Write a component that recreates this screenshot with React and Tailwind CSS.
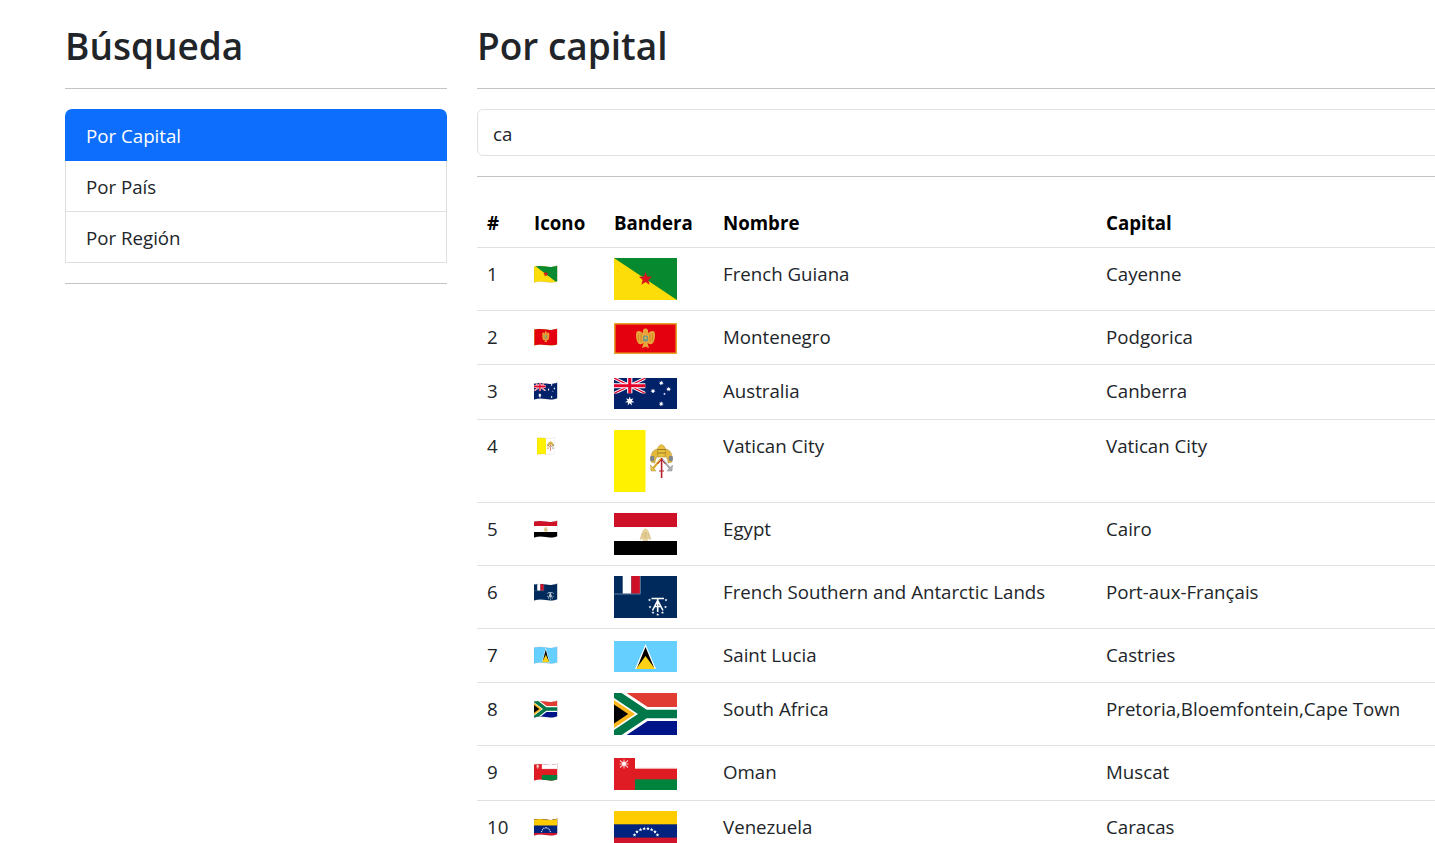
import { useId } from 'react';

const star = (cx, cy, r, points = 5, inner = 0.42) => {
    const pts = [];
    for (let i = 0; i < points * 2; i++) {
        const rad = i % 2 === 0 ? r : r * inner;
        const a = -Math.PI / 2 + (i * Math.PI) / points;
        pts.push(`${(cx + rad * Math.cos(a)).toFixed(2)},${(cy + rad * Math.sin(a)).toFixed(2)}`);
    }
    return pts.join(' ');
};

const FrenchGuiana = () => (
    <>
        <rect width="63" height="42" fill="#fcdd09" />
        <polygon points="0,0 63,0 63,42" fill="#078930" />
        <polygon points={star(31.5, 21, 7)} fill="#da121a" />
    </>
);

const Montenegro = () => (
    <>
        <rect width="63" height="31" fill="#e8a52b" />
        <rect x="1.5" y="1.5" width="60" height="28" fill="#e4000f" />
        <path d="M30 11 C27 8 24 7 22.5 9 C21.5 12 22 17 24 20 C26 22 28 21 30 20 Z" fill="#e9a53a" />
        <path d="M33 11 C36 8 39 7 40.5 9 C41.5 12 41 17 39 20 C37 22 35 21 33 20 Z" fill="#e9a53a" />
        <path d="M29 10 L29 7 L30.5 5.5 L32.5 5.5 L34 7 L34 10 L33.5 20 L35 25 L31.5 23.8 L28 25 L29.5 20 Z" fill="#e9a53a" />
        <path d="M24.5 11V18M27 10.5V19M36 10.5V19M38.5 11V18" stroke="#c47f22" strokeWidth="0.7" />
        <rect x="29" y="12.5" width="5" height="6" rx="1.6" fill="#6f9a8a" />
        <circle cx="31.5" cy="15" r="1.3" fill="#d4b84f" />
    </>
);

const Australia = () => (
    <>
        <rect width="63" height="31" fill="#012169" />
        <svg x="0" y="0" width="31.5" height="15.5" viewBox="0 0 60 30" preserveAspectRatio="none">
            <path d="M0 0L60 30M60 0L0 30" stroke="#fff" strokeWidth="6" />
            <path d="M0 0L60 30M60 0L0 30" stroke="#e4002b" strokeWidth="2.4" />
            <path d="M30 0V30M0 15H60" stroke="#fff" strokeWidth="10" />
            <path d="M30 0V30M0 15H60" stroke="#e4002b" strokeWidth="6" />
        </svg>
        <polygon points={star(15.75, 23.2, 4.8, 7, 0.45)} fill="#fff" />
        <polygon points={star(47.2, 25.8, 2.6, 7, 0.45)} fill="#fff" />
        <polygon points={star(39, 13, 2.6, 7, 0.45)} fill="#fff" />
        <polygon points={star(47.3, 5, 2.6, 7, 0.45)} fill="#fff" />
        <polygon points={star(54.6, 11.2, 2.6, 7, 0.45)} fill="#fff" />
        <polygon points={star(50.5, 16, 1.4, 5)} fill="#fff" />
    </>
);

const Vatican = () => (
    <>
        <rect width="63" height="62" fill="#fff" />
        <rect width="31.5" height="62" fill="#fff100" />
        <path d="M37 32 C36 24 39 19 44 19 L45 26 C42 27 41 30 41 33 Z" fill="#e2b93b" stroke="#9a7a22" strokeWidth="0.4" />
        <path d="M58 32 C59 24 56 19 51 19 L50 26 C53 27 54 30 54 33 Z" fill="#e2b93b" stroke="#9a7a22" strokeWidth="0.4" />
        <rect x="36.2" y="26" width="4" height="5" rx="1" fill="#7f858b" />
        <rect x="54.8" y="26" width="4" height="5" rx="1" fill="#7f858b" />
        <path d="M44 27 L43.5 19 L45 16 L47.5 14.5 L50 16 L51.5 19 L51 27 Z" fill="#eac23f" stroke="#a8811c" strokeWidth="0.5" />
        <path d="M43.5 19.5H51.5M43.5 23H51.5" stroke="#7d6018" strokeWidth="0.7" />
        <path d="M38.5 39 L47 29" stroke="#d8a92c" strokeWidth="2" />
        <path d="M56.5 39 L48 29" stroke="#a9adb2" strokeWidth="2" />
        <path d="M36.5 35 L42 41 L37 41 Z" fill="#e8c24a" stroke="#9a7a22" strokeWidth="0.4" />
        <path d="M58.5 35 L53 41 L58 41 Z" fill="#b0b3b7" stroke="#777" strokeWidth="0.4" />
        <rect x="46.8" y="28" width="1.6" height="20" fill="#b5232b" />
        <path d="M43.5 34 L47.5 29.5 L51.5 34" fill="none" stroke="#b5232b" strokeWidth="1" />
        <path d="M45 41H50" stroke="#b5232b" strokeWidth="1" />
    </>
);

const Egypt = () => (
    <>
        <rect width="63" height="42" fill="#fff" />
        <rect width="63" height="14" fill="#ce1126" />
        <rect y="28" width="63" height="14" fill="#000" />
        <path d="M31.5 15.5 L33.2 17 L34 17.5 L37 26.5 L33.6 25.5 L33.6 27.5 L29.4 27.5 L29.4 25.5 L26 26.5 L29 17.5 L29.8 17 Z" fill="#e8d6a4" stroke="#cdb06a" strokeWidth="0.4" />
        <path d="M30.3 19V25.5M31.5 19V25.5M32.7 19V25.5M28.6 20L27.6 25M34.4 20L35.4 25" stroke="#c9a85c" strokeWidth="0.45" />
    </>
);

const Taaf = () => (
    <>
        <rect width="63" height="42" fill="#002a5c" />
        <rect x="8.7" width="8.7" height="17.6" fill="#fff" />
        <rect x="17.4" width="8.6" height="17.6" fill="#ce1126" />
        <path d="M0 18 H26.3 V0" fill="none" stroke="#8c9db5" strokeWidth="0.7" />
        <path d="M37.5 22.5H50M43.7 22.5V36M38.5 34.5L43.7 24.5L49 34.5M40.5 30.5H47" fill="none" stroke="#fff" strokeWidth="1.6" />
        {[[35.5, 24], [52, 24], [36, 31], [51.5, 31], [43.7, 38.5], [39, 36.5], [48.5, 36.5]].map(([x, y]) => (
            <polygon key={`${x}-${y}`} points={star(x, y, 1.6)} fill="#fff" />
        ))}
    </>
);

const SaintLucia = () => (
    <>
        <rect width="63" height="31" fill="#65cfff" />
        <polygon points="31.5,3 42,28 21,28" fill="#fff" />
        <polygon points="31.5,6 40,26.5 23,27 " fill="#000" />
        <polygon points="31.5,15 41,28 22,28" fill="#fcd116" />
    </>
);

const SouthAfrica = () => (
    <>
        <rect width="63" height="21" fill="#e03c31" />
        <rect y="21" width="63" height="21" fill="#001489" />
        <path d="M0 0 L31.5 21 L0 42 M31.5 21 H63" fill="none" stroke="#fff" strokeWidth="14" />
        <path d="M0 0 L31.5 21 L0 42 M31.5 21 H63" fill="none" stroke="#007749" strokeWidth="8.4" />
        <polygon points="0,7 21,21 0,35" fill="#ffb81c" />
        <polygon points="0,11.6 14.2,21 0,30.4" fill="#000" />
    </>
);

const Oman = () => (
    <>
        <rect width="63" height="32" fill="#df1b23" />
        <rect x="21" width="42" height="10.6" fill="#fff" />
        <rect x="21" y="21.3" width="42" height="10.7" fill="#00843d" />
        <path d="M21 10.3H63" stroke="#f0b7b9" strokeWidth="0.8" />
        <path d="M6 2.5L14 9.5M14 2.5L6 9.5M10 1.5V10.5M5.5 6H14.5" stroke="#fff" strokeWidth="1.1" opacity="0.75" />
        <circle cx="10" cy="5.5" r="2" fill="#fff" opacity="0.8" />
    </>
);

const Venezuela = () => (
    <>
        <rect width="63" height="32" fill="#cf142b" />
        <rect width="63" height="26.6" fill="#00247d" />
        <rect width="63" height="13.3" fill="#ffcc00" />
        {[[20.5, 24], [23, 20.8], [26.5, 18.6], [30.2, 17.6], [34, 17.6], [37.7, 18.6], [41, 20.8], [43.5, 24]].map(([x, y]) => (
            <polygon key={`${x}-${y}`} points={star(x, y, 2)} fill="#fff" />
        ))}
    </>
);

// big flag, rendered from the same drawing as the waving icon
const Flag = ({ Art, h }) => (
    <svg width="63" height={h} viewBox={`0 0 63 ${h}`} className="block">
        <Art />
    </svg>
);

const Emoji = ({ Art, h, narrow }) => {
    const id = useId();
    const wave = narrow
        ? 'M0 1C4 0.4 6 1 9 1.3S15 0.8 18 0.3V16.6C15 17.5 12 17.6 9 17.2S4 16.8 0 17.5Z'
        : 'M0 1.6C4 0.6 8 0.9 12 1.6S20 1.8 23.5 0.4V16.2C20 17.6 16 17.8 12 17.1S4 16.4 0 17.4Z';
    const w = narrow ? 18 : 23.5;
    return (
        <svg width={w} height="18" viewBox={`0 0 ${w} 18`} className={narrow ? 'block ml-[3px]' : 'block'}>
            <clipPath id={id}><path d={wave} /></clipPath>
            <g clipPath={`url(#${id})`}>
                <svg width={w} height="18" viewBox={`0 0 63 ${h}`} preserveAspectRatio="none">
                    <Art />
                </svg>
            </g>
            <path d={wave} fill="none" stroke="#000" strokeOpacity="0.12" strokeWidth="0.6" />
        </svg>
    );
};

const rows = [
    { n: 1, name: 'French Guiana', capital: 'Cayenne', Art: FrenchGuiana, h: 42, rowClass: 'h-[63px]', flagPad: 'pt-[10px]' },
    { n: 2, name: 'Montenegro', capital: 'Podgorica', Art: Montenegro, h: 31, rowClass: 'h-[54px]', flagPad: 'pt-[12px]' },
    { n: 3, name: 'Australia', capital: 'Canberra', Art: Australia, h: 31, rowClass: 'h-[55px]', flagPad: 'pt-[13px]' },
    { n: 4, name: 'Vatican City', capital: 'Vatican City', Art: Vatican, h: 62, rowClass: 'h-[83px]', flagPad: 'pt-[10px]', narrow: true },
    { n: 5, name: 'Egypt', capital: 'Cairo', Art: Egypt, h: 42, rowClass: 'h-[63px]', flagPad: 'pt-[10px]' },
    { n: 6, name: 'French Southern and Antarctic Lands', capital: 'Port-aux-Français', Art: Taaf, h: 42, rowClass: 'h-[63px]', flagPad: 'pt-[10px]' },
    { n: 7, name: 'Saint Lucia', capital: 'Castries', Art: SaintLucia, h: 31, rowClass: 'h-[54px]', flagPad: 'pt-[12px]' },
    { n: 8, name: 'South Africa', capital: 'Pretoria,Bloemfontein,Cape Town', Art: SouthAfrica, h: 42, rowClass: 'h-[63px]', flagPad: 'pt-[10px]' },
    { n: 9, name: 'Oman', capital: 'Muscat', Art: Oman, h: 32, rowClass: 'h-[55px]', flagPad: 'pt-[12px]' },
    { n: 10, name: 'Venezuela', capital: 'Caracas', Art: Venezuela, h: 32, rowClass: 'h-[55px]', flagPad: 'pt-[10px]' },
];

const App = () => {
    return (
        <div className="h-screen w-screen overflow-hidden bg-white flex gap-[30px] pl-[65px] font-['Open_Sans',sans-serif] text-[18.7px] leading-[30px] text-[#212529]">
            <div className="w-[382px] shrink-0">
                <h1 className="mt-5 h-12 text-[37px] leading-[52px] font-semibold">Búsqueda</h1>
                <hr className="my-5 border-[#c4c4c4]" />
                <ul>
                    <li className="h-[52px] pt-[2px] px-[21px] flex items-center rounded-t-[7px] bg-[#0d6efd] text-white">Por Capital</li>
                    <li className="h-[51px] pt-[2px] px-5 flex items-center border-x border-b border-[#dfdfdf]">Por País</li>
                    <li className="h-[51px] pt-[2px] px-5 flex items-center border-x border-b border-[#dfdfdf]">Por Región</li>
                </ul>
                <hr className="my-5 border-[#c4c4c4]" />
            </div>
            <div className="w-[1040px] shrink-0">
                <h1 className="mt-5 h-12 text-[37px] leading-[52px] font-semibold">Por capital</h1>
                <hr className="my-5 border-[#c4c4c4]" />
                <input
                    readOnly
                    value="ca"
                    className="block w-full h-[47px] pt-[2px] px-[15px] rounded-[6px] border border-[#dee2e6] text-[#212529] outline-none"
                />
                <hr className="my-5 border-[#c4c4c4]" />
                <table className="w-full table-fixed border-collapse">
                    <colgroup>
                        <col className="w-[47px]" />
                        <col className="w-[80px]" />
                        <col className="w-[109px]" />
                        <col className="w-[383px]" />
                        <col />
                    </colgroup>
                    <thead>
                        <tr className="h-[50px] border-b border-[#dee2e6] text-left text-black">
                            <th className="px-[10px] pt-[3px] font-bold">#</th>
                            <th className="px-[10px] pt-[3px] font-bold">Icono</th>
                            <th className="px-[10px] pt-[3px] font-bold">Bandera</th>
                            <th className="px-[10px] pt-[3px] font-bold">Nombre</th>
                            <th className="px-[10px] pt-[3px] font-bold">Capital</th>
                        </tr>
                    </thead>
                    <tbody>
                        {rows.map((row) => (
                            <tr key={row.n} className={`${row.rowClass} border-b border-[#dee2e6] align-top`}>
                                <td className="px-[10px] pt-[11px]">{row.n}</td>
                                <td className="px-[10px] pt-[17px]">
                                    <Emoji Art={row.Art} h={row.h} narrow={row.narrow} />
                                </td>
                                <td className={`px-[10px] ${row.flagPad}`}>
                                    <Flag Art={row.Art} h={row.h} />
                                </td>
                                <td className="px-[10px] pt-[11px]">{row.name}</td>
                                <td className="px-[10px] pt-[11px]">{row.capital}</td>
                            </tr>
                        ))}
                    </tbody>
                </table>
            </div>
        </div>
    );
};

export default App;
